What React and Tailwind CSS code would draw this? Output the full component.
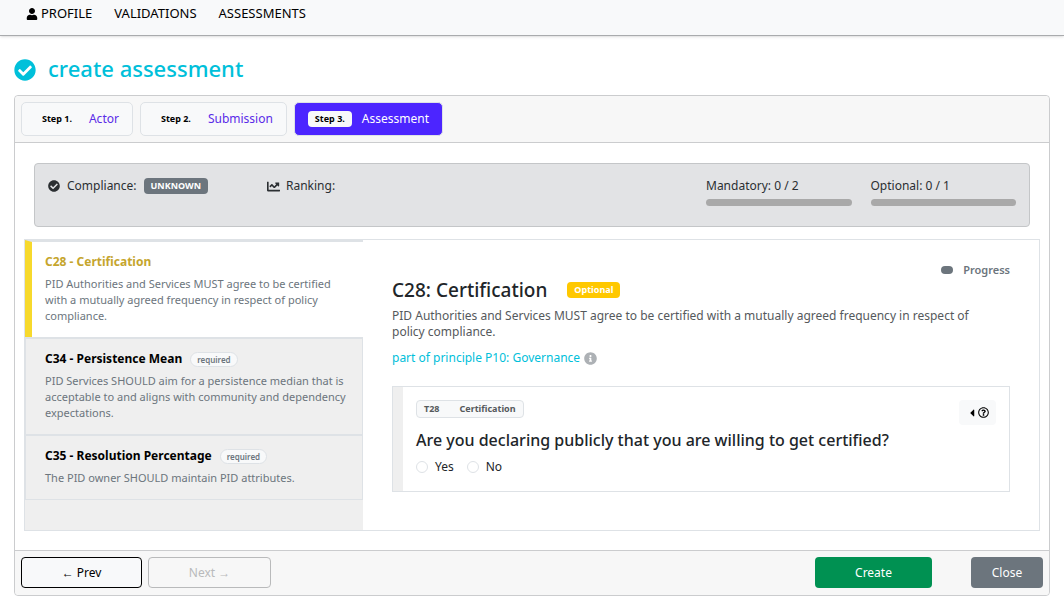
import React from "react";
import {
  FaUser,
  FaCheckCircle,
  FaChartLine,
  FaInfoCircle,
  FaCaretLeft,
  FaRegQuestionCircle,
} from "react-icons/fa";

const steps = [
  { n: "Step 1.", label: "Actor" },
  { n: "Step 2.", label: "Submission" },
  { n: "Step 3.", label: "Assessment", active: true },
];

const criteria = [
  {
    title: "C28 - Certification",
    text: "PID Authorities and Services MUST agree to be certified with a mutually agreed frequency in respect of policy compliance.",
    active: true,
  },
  {
    title: "C34 - Persistence Mean",
    text: "PID Services SHOULD aim for a persistence median that is acceptable to and aligns with community and dependency expectations.",
    required: true,
  },
  {
    title: "C35 - Resolution Percentage",
    text: "The PID owner SHOULD maintain PID attributes.",
    required: true,
  },
];

function Nav() {
  return (
    <nav className="flex h-9 items-start gap-[22px] border-b border-[#a9abad] bg-[#f8f9fa] px-[26px] pt-[3px] text-[13px] leading-5 text-black shadow-sm">
      <a href="#profile" className="flex items-center gap-[3px]">
        <FaUser className="mt-0.5 size-3" />
        PROFILE
      </a>
      <a href="#validations">VALIDATIONS</a>
      <a href="#assessments">ASSESSMENTS</a>
    </nav>
  );
}

function Step({ n, label, active }) {
  return (
    <button
      type="button"
      className={
        "flex h-[34px] items-center gap-2.5 rounded-[5px] border border-[#dee2e6] px-[13px] text-xs " +
        (active ? "bg-[#4c25ff] text-white" : "bg-[#f8f9fa] text-[#5a2be8]")
      }
    >
      <span className="rounded bg-[#f8f9fa] px-[7px] text-[9px] leading-4 font-bold text-black">{n}</span>
      {label}
    </button>
  );
}

function Meter({ label }) {
  return (
    <div className="flex-1">
      <div className="text-xs leading-5">{label}</div>
      <div className="mt-[3px] h-[7px] rounded-full bg-[#a9a9a9]" />
    </div>
  );
}

function Criterion({ title, text, active, required }) {
  return (
    <button
      type="button"
      className={
        "block w-full border-t-2 border-[#dee2e6] pt-2.5 pr-4 pb-[13px] text-left " +
        (active
          ? "border-l-[7px] border-l-[#f7d92c] bg-white pl-[13px]"
          : "border-r border-l border-r-[#dee2e6] border-l-[#dee2e6] bg-[#efefef] pl-[19px]")
      }
    >
      <span className="mb-1 flex h-5 items-center gap-2">
        <span className={"text-xs font-bold " + (active ? "text-[#c5a52d]" : "text-black")}>{title}</span>
        {required && (
          <span className="rounded-full border border-[#dee2e6] bg-[#f8f9fa] px-1.5 text-[8px] leading-[13px] font-semibold text-[#6c757d]">
            required
          </span>
        )}
      </span>
      <span className="block text-[11px] leading-4 text-[#6c757d]">{text}</span>
    </button>
  );
}

function Radio({ label }) {
  return (
    <label className="flex items-center gap-[7px]">
      <input
        type="radio"
        name="certified"
        className="size-3 appearance-none rounded-full border border-[#dee2e6] bg-white checked:border-4 checked:border-[#4c25ff]"
      />
      {label}
    </label>
  );
}

export default function App() {
  return (
    <div className="bg-white font-['Noto_Sans',sans-serif] text-[#212529]">
      <Nav />
      <main className="px-3.5 pt-4 pb-[18px]">
        <h1 className="mb-3 flex h-[31px] items-center gap-3 text-[22px] leading-7 font-medium text-[#00c0da]">
          <FaCheckCircle className="mt-1 size-[22px]" />
          create assessment
        </h1>

        <section className="rounded border border-[#cbccce]">
          <header className="flex gap-[7px] rounded-t border-b border-[#cbccce] bg-[#f7f7f7] p-1.5">
            {steps.map((s) => (
              <Step key={s.n} {...s} />
            ))}
          </header>

          <div className="px-[9px] pt-5 pb-[19px]">
            <div className="mx-2.5 mb-3 flex h-16 items-start rounded border border-[#c4c6c8] bg-[#e2e3e5] px-[13px] pt-3 text-xs leading-5 text-[#2b2f32]">
              <div className="flex w-[219px] items-center">
                <FaCheckCircle className="mr-[7px] size-3" />
                Compliance:
                <span className="ml-[7px] rounded bg-[#6c757d] px-[7px] text-[9px] leading-4 font-bold text-white">UNKNOWN</span>
              </div>
              <div className="flex flex-1 items-center gap-1.5">
                <FaChartLine className="size-[13px]" />
                Ranking:
              </div>
              <div className="flex w-[310px] gap-[19px]">
                <Meter label="Mandatory: 0 / 2" />
                <Meter label="Optional: 0 / 1" />
              </div>
            </div>

            <div className="flex border border-[#dee2e6]">
              <aside className="w-1/3 bg-[#efefef] pb-[30px]">
                <div className="border-b border-[#dee2e6]">
                  {criteria.map((c) => (
                    <Criterion key={c.title} {...c} />
                  ))}
                </div>
              </aside>

              <article className="flex-1 px-[29px] pt-5 pb-[38px]">
                <div className="flex items-center justify-end gap-2.5 text-[11px] leading-5 font-semibold text-[#6c757d]">
                  <span className="h-2 w-3 rounded bg-[#6c757d]" />
                  Progress
                </div>
                <h2 className="flex items-center gap-5 text-[19px] leading-5 font-medium">
                  C28: Certification
                  <span className="rounded bg-[#ffc800] px-[7px] text-[9px] leading-4 font-bold text-white">Optional</span>
                </h2>
                <p className="mt-2 pr-5 text-xs leading-4 text-[#55595c]">
                  PID Authorities and Services MUST agree to be certified with a mutually agreed frequency in respect of
                  policy compliance.
                </p>
                <p className="mt-2 flex items-center gap-1 text-xs leading-5 text-[#00c0da]">
                  part of principle P10: Governance
                  <FaInfoCircle className="size-[13px] text-[#adb1b5]" />
                </p>

                <div className="mt-[18px] border border-[#dee2e6]">
                  <div className="flex items-start justify-between border-l-10 border-[#efefef] pt-[13px] pr-[13px] pb-[14px] pl-[13px]">
                    <div>
                      <div className="flex w-fit gap-5 rounded border border-[#dee2e6] bg-[#f8f9fa] px-[7px] text-[9px] leading-4 font-bold text-[#55595c]">
                        <span>T28</span>
                        <span>Certification</span>
                      </div>
                      <h3 className="mt-2.5 text-base leading-6 font-medium">
                        Are you declaring publicly that you are willing to get certified?
                      </h3>
                      <div className="mt-[5px] flex gap-[13px] text-xs leading-5">
                        <Radio label="Yes" />
                        <Radio label="No" />
                      </div>
                    </div>
                    <button
                      type="button"
                      aria-label="Guidance"
                      className="flex h-[25px] w-[37px] items-center justify-end rounded-sm bg-[#f8f9fa] pr-[7px] text-black"
                    >
                      <FaCaretLeft className="size-3" />
                      <FaRegQuestionCircle className="size-[11px]" />
                    </button>
                  </div>
                </div>
              </article>
            </div>
          </div>

          <footer className="flex rounded-b border-t border-[#cbccce] bg-[#f7f7f7] px-1.5 pt-1.5 pb-[7px] text-xs">
            <button type="button" className="h-[31px] w-[121px] rounded border border-black bg-[#f8f9fa] text-black">
              ← Prev
            </button>
            <button type="button" disabled className="ml-1.5 h-[31px] w-[123px] rounded border border-[#b9babb] text-[#b9babb]">
              Next →
            </button>
            <button type="button" className="ml-auto h-[31px] w-[117px] rounded bg-[#009152] text-white">
              Create
            </button>
            <button type="button" className="ml-[39px] h-[31px] w-[72px] rounded bg-[#6c757d] text-white">
              Close
            </button>
          </footer>
        </section>
      </main>
    </div>
  );
}
